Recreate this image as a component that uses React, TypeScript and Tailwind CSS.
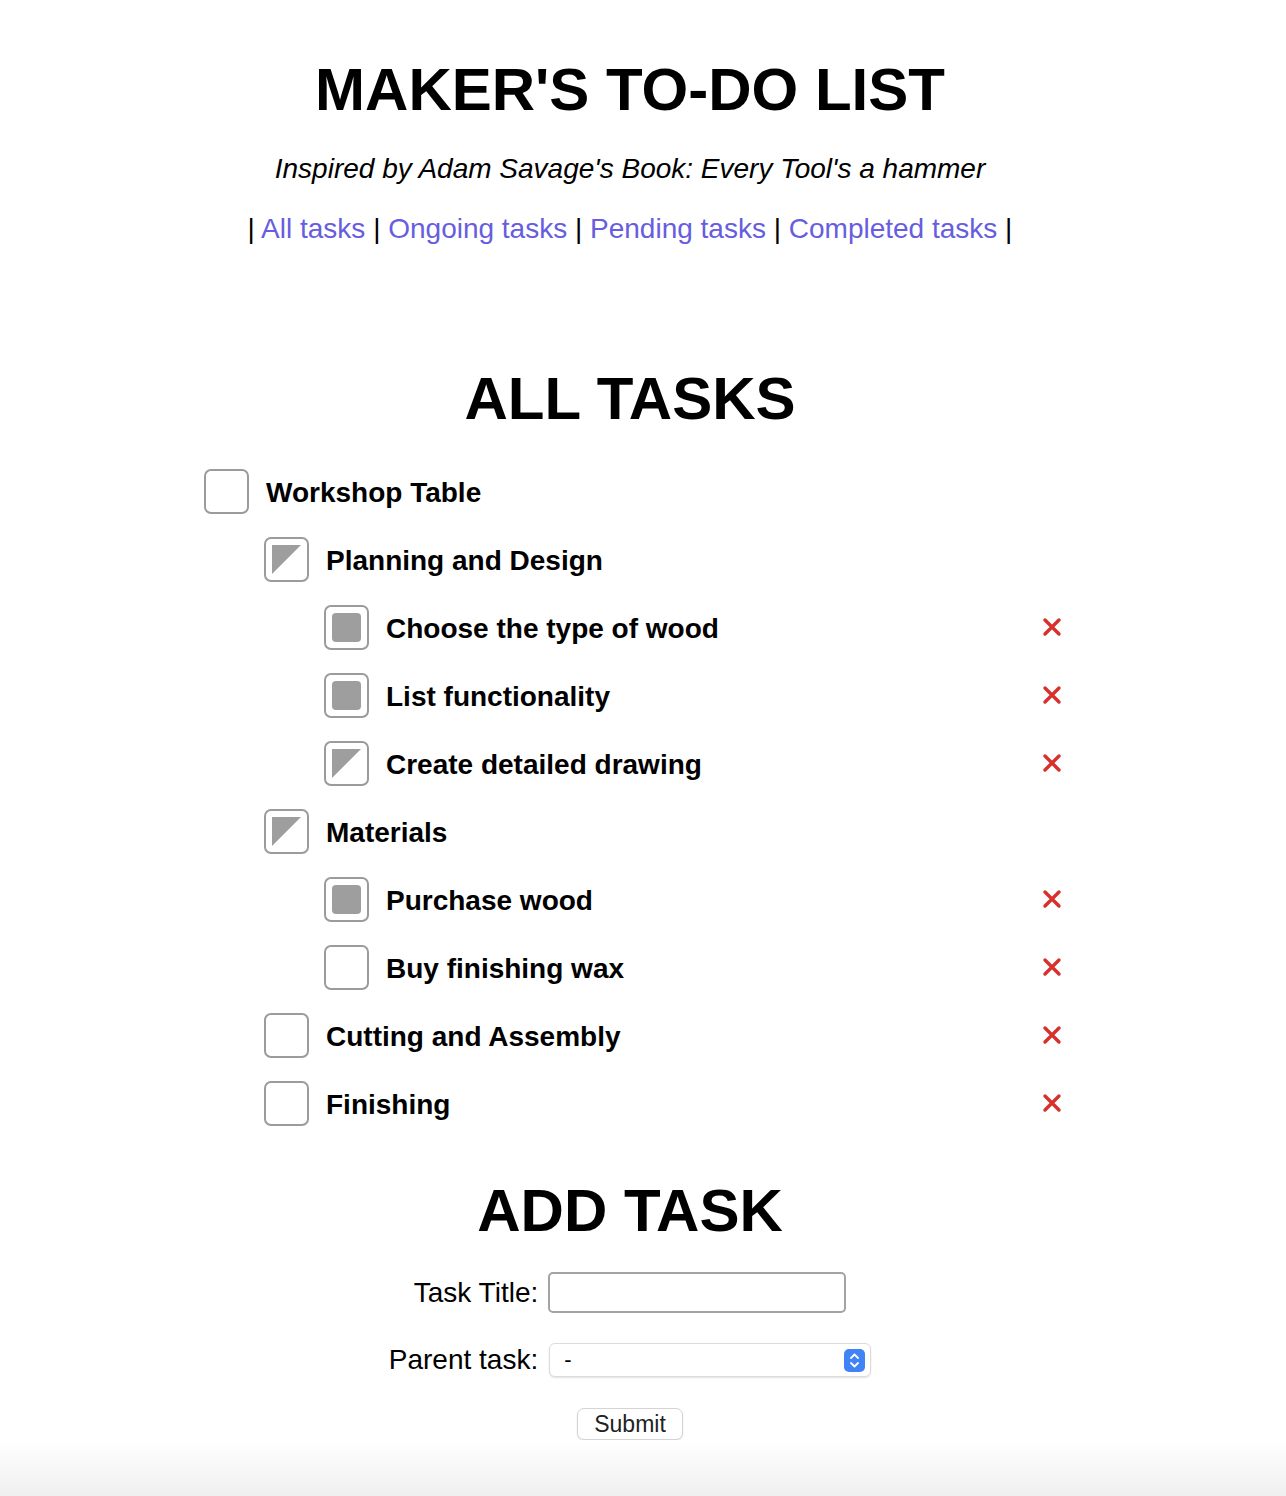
import { useState } from "react";

type Status = "empty" | "partial" | "done";

const tasks: { id: number; title: string; level: number; status: Status; leaf: boolean }[] = [
  { id: 1, title: "Workshop Table", level: 0, status: "empty", leaf: false },
  { id: 2, title: "Planning and Design", level: 1, status: "partial", leaf: false },
  { id: 3, title: "Choose the type of wood", level: 2, status: "done", leaf: true },
  { id: 4, title: "List functionality", level: 2, status: "done", leaf: true },
  { id: 5, title: "Create detailed drawing", level: 2, status: "partial", leaf: true },
  { id: 6, title: "Materials", level: 1, status: "partial", leaf: false },
  { id: 7, title: "Purchase wood", level: 2, status: "done", leaf: true },
  { id: 8, title: "Buy finishing wax", level: 2, status: "empty", leaf: true },
  { id: 9, title: "Cutting and Assembly", level: 1, status: "empty", leaf: true },
  { id: 10, title: "Finishing", level: 1, status: "empty", leaf: true },
];

const indent = ["ml-0", "ml-[60px]", "ml-[120px]"];

const Box = ({ status }: { status: Status }) => (
  <div className="w-[45px] h-[45px] shrink-0 rounded-[7px] border-2 border-[#9b9b9b] bg-white flex items-center justify-center">
    {status === "done" && <div className="w-[29px] h-[29px] rounded-[4px] bg-[#9e9e9e]" />}
    {status === "partial" && (
      <svg width="29" height="29" viewBox="0 0 29 29">
        <polygon points="0,0 29,0 0,29" fill="#9e9e9e" />
      </svg>
    )}
  </div>
);

const Cross = () => (
  <svg width="20" height="20" viewBox="0 0 20 20">
    <path d="M3 3 L17 17 M17 3 L3 17" stroke="#d8302a" strokeWidth="3.4" strokeLinecap="round" />
  </svg>
);

const Stepper = () => (
  <svg width="21" height="23" viewBox="0 0 21 23">
    <rect x="0" y="0" width="21" height="23" rx="5" fill="#3f83f7" />
    <path d="M7 9 L10.5 5.5 L14 9 M7 14 L10.5 17.5 L14 14" stroke="#fff" strokeWidth="1.8" fill="none" strokeLinecap="round" strokeLinejoin="round" />
  </svg>
);

const App = () => {
  const [title, setTitle] = useState<string>("");

  return (
    <div className="min-h-[1496px] bg-white text-black font-['Liberation_Sans',Arial,sans-serif] flex flex-col">
      <div className="w-[1260px] flex flex-col items-center">
        <h1 className="mt-[60px] text-[60px] leading-[60px] font-bold">MAKER'S TO-DO LIST</h1>
        <p className="mt-[35px] text-[28px] leading-[28px] italic">
          Inspired by Adam Savage's Book: Every Tool's a hammer
        </p>
        <nav className="mt-[32px] text-[28px] leading-[28px] whitespace-pre">
          {"| "}
          <a className="text-[#675de0]">All tasks</a>
          {" | "}
          <a className="text-[#675de0]">Ongoing tasks</a>
          {" | "}
          <a className="text-[#675de0]">Pending tasks</a>
          {" | "}
          <a className="text-[#675de0]">Completed tasks</a>
          {" |"}
        </nav>

        <h2 className="mt-[126px] text-[60px] leading-[60px] font-bold">ALL TASKS</h2>
      </div>

      <ul className="mt-[28px] ml-[204px] w-[858px] flex flex-col">
        {tasks.map((t) => (
          <li key={t.id} className="h-[68px] flex items-center">
            <div className={`flex items-center gap-[17px] ${indent[t.level]}`}>
              <Box status={t.status} />
              <span className="mt-[3px] text-[28px] leading-[28px] font-bold">{t.title}</span>
            </div>
            {t.leaf && (
              <button className="ml-auto w-[20px] h-[20px] flex items-center justify-center">
                <Cross />
              </button>
            )}
          </li>
        ))}
      </ul>

      <div className="w-[1260px] flex flex-col items-center">
        <h2 className="mt-[44px] text-[60px] leading-[60px] font-bold">ADD TASK</h2>

        <form className="flex flex-col items-center" onSubmit={(e) => e.preventDefault()}>
          <div className="mt-[31px] flex items-center gap-[10px]">
            <label className="text-[28px] leading-[28px]">Task Title:</label>
            <input
              type="text"
              value={title}
              onChange={(e) => setTitle(e.target.value)}
              className="w-[298px] h-[41px] border-2 border-[#a3a3a3] rounded-[5px] px-2 text-[22px] outline-none"
            />
          </div>
          <div className="mt-[30px] flex items-center gap-[11px]">
            <label className="text-[28px] leading-[28px]">Parent task:</label>
            <div className="w-[322px] h-[34px] rounded-[6px] border border-[#dcdcdc] shadow-[0_1px_2px_rgba(0,0,0,0.12)] bg-white flex items-center pl-[14px] pr-[5px]">
              <span className="text-[22px] leading-[22px]">-</span>
              <span className="ml-auto flex">
                <Stepper />
              </span>
            </div>
          </div>
          <button
            type="submit"
            className="mt-[31px] w-[106px] h-[32px] rounded-[7px] border border-[#d4d4d4] shadow-[0_1px_2px_rgba(0,0,0,0.1)] bg-white text-[23px] leading-[23px] text-[#222]"
          >
            Submit
          </button>
        </form>
      </div>

      <div className="mt-auto h-[56px] bg-gradient-to-b from-white to-[#efefef]" />
    </div>
  );
};

export default App;
